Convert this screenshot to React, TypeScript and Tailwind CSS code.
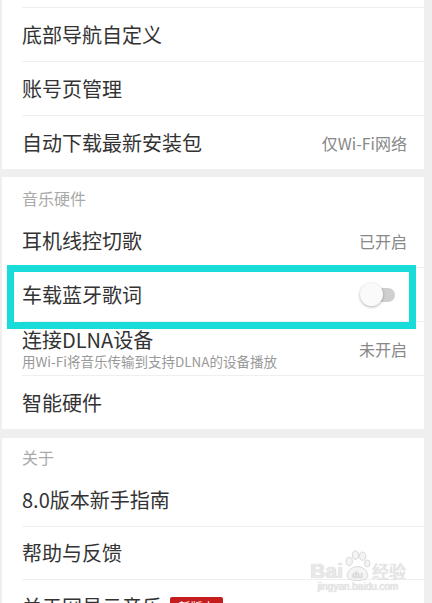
import React from 'react';

type Row = { title: string; sub?: string; value?: string; toggle?: boolean; highlight?: boolean };

const font = { fontFamily: '"Noto Sans CJK SC", "Noto Sans", sans-serif' };

function SettingRow({ row, last, h = 'h-[53px]' }: { row: Row; last?: boolean; h?: string }) {
  return (
    <div className="relative">
      <div className={`flex ${h} items-center justify-between pl-[20px] pr-[17px]`}>
        <div className="flex flex-col">
          <span className={`text-[20px] text-[#333] ${row.sub ? 'leading-[22px]' : 'leading-[24px]'}`}>{row.title}</span>
          {row.sub && <span className="mt-[2px] text-[13.5px] leading-[16px] text-[#999]">{row.sub}</span>}
        </div>
        {row.value && <span className="text-[16px] text-[#888]">{row.value}</span>}
        {row.toggle && (
          <div className="relative mr-[12px] h-[23px] w-[35px]">
            <div className="absolute right-0 top-[5px] h-[14px] w-[30px] rounded-full bg-[#cfcfcf]" />
            <div className="absolute left-0 top-0 h-[23px] w-[23px] rounded-full bg-[#fafafa] shadow-[0_1px_3px_rgba(0,0,0,0.3)]" />
          </div>
        )}
      </div>
      {!last && <div className="ml-[20px] h-px bg-[#efefef]" />}
      {row.highlight && (
        <div className="pointer-events-none absolute -top-[3px] left-[5px] right-[8px] h-[64px] border-[7px] border-[#19dcd9]" />
      )}
    </div>
  );
}

export default function App() {
  return (
    <div className="relative h-[603px] w-[432px] overflow-hidden bg-[#efefef] pl-[2px] pr-[8px]" style={font}>
      <div className="flex flex-col">
        <div className="bg-white">
          <div className="h-[7px]" />
          <div className="ml-[20px] h-px bg-[#efefef]" />
          <SettingRow row={{ title: '底部导航自定义' }} />
          <SettingRow row={{ title: '账号页管理' }} />
          <SettingRow row={{ title: '自动下载最新安装包', value: '仅Wi-Fi网络' }} last />
        </div>

        <div className="h-[8px]" />

        <div className="bg-white">
          <div className="flex h-[37px] items-end pb-[4px] pl-[20px] text-[16px] leading-[24px] text-[#aaa]">音乐硬件</div>
          <SettingRow row={{ title: '耳机线控切歌', value: '已开启' }} />
          <SettingRow row={{ title: '车载蓝牙歌词', toggle: true, highlight: true }} />
          <SettingRow row={{ title: '连接DLNA设备', sub: '用Wi-Fi将音乐传输到支持DLNA的设备播放', value: '未开启' }} />
          <SettingRow row={{ title: '智能硬件' }} last />
        </div>

        <div className="h-[9px]" />

        <div className="bg-white">
          <div className="flex h-[36px] items-end pb-[5px] pl-[20px] text-[16px] leading-[24px] text-[#aaa]">关于</div>
          <SettingRow row={{ title: '8.0版本新手指南' }} h="h-[52px]" />
          <SettingRow row={{ title: '帮助与反馈' }} h="h-[52px]" />
          <div className="flex h-[53px] items-center gap-[8px] pl-[20px]">
            <span className="text-[20px] text-[#333]">关于网易云音乐</span>
            <span className="w-[53px] rounded-[2px] bg-[#c51d1d] text-center text-[12px] leading-[20px] text-white">新版本</span>
          </div>
        </div>
      </div>

      {/* baidu watermark */}
      <div className="pointer-events-none absolute bottom-[10px] right-[26px] flex flex-col items-center text-[#e9e9e9]">
        <div className="flex items-end gap-[1px]" style={{ textShadow: '0 0 1px #bbb' }}>
          <span className="text-[21px] font-bold leading-[20px]" style={{ fontFamily: '"Liberation Sans", sans-serif' }}>Bai</span>
          <svg width="27" height="31" viewBox="0 0 26 30" fill="#f4f4f4" stroke="#d2d2d2" strokeWidth="0.8">
            <ellipse cx="5" cy="11" rx="3" ry="4" />
            <ellipse cx="11" cy="5" rx="3" ry="4" />
            <ellipse cx="18" cy="6" rx="3" ry="4" />
            <ellipse cx="22.5" cy="13" rx="2.6" ry="3.4" />
            <path d="M3 25c0-5 5-9 10-9s10 4 10 9c0 3-4 4.5-10 4.5S3 28 3 25z" />
            <text x="13" y="27" fontSize="9" textAnchor="middle" fill="#dcdcdc" stroke="none" fontFamily="Liberation Sans">du</text>
          </svg>
          <span className="text-[17px] leading-[20px]">经验</span>
        </div>
        <span className="text-[10px] leading-[12px]" style={{ fontFamily: '"Liberation Sans", sans-serif', textShadow: '0 0 1px #bbb' }}>
          jingyan.baidu.com
        </span>
      </div>
    </div>
  );
}
